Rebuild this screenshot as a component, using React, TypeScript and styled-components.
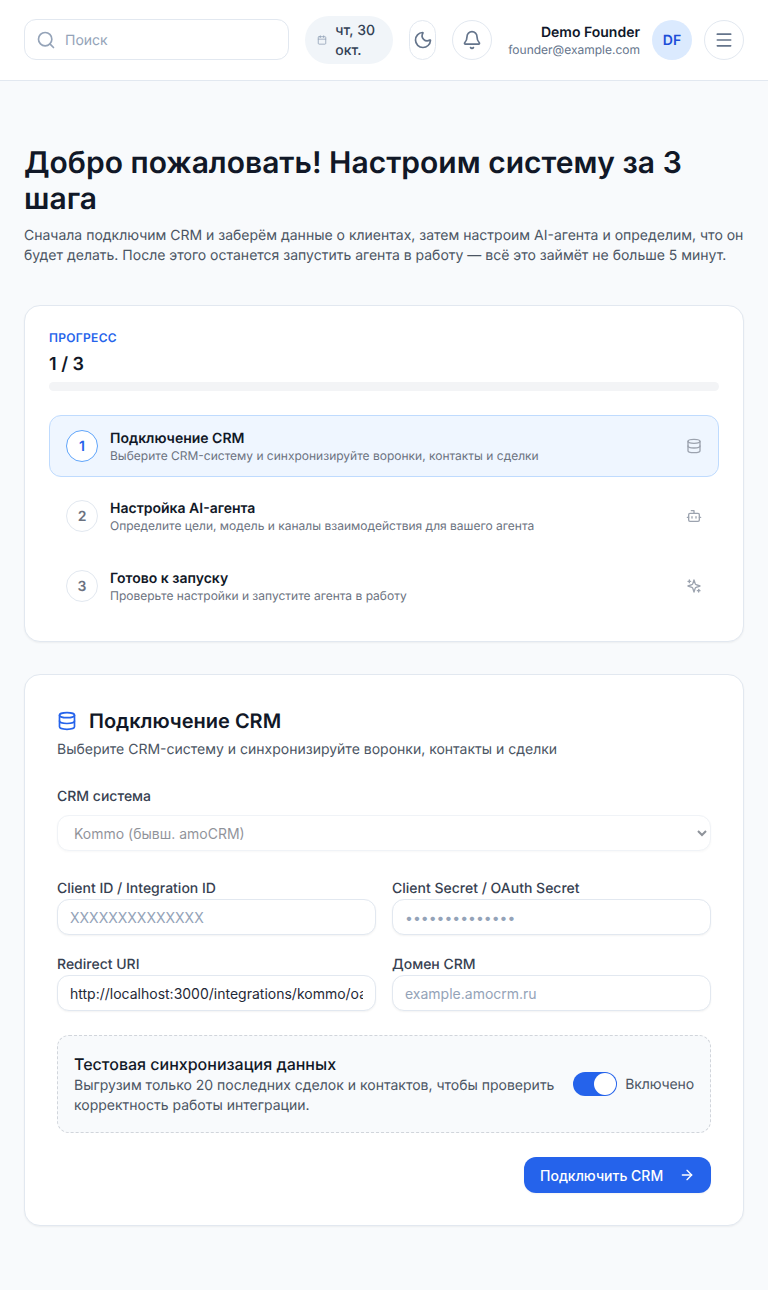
import React from "react";
import styled, { createGlobalStyle } from "styled-components";
import { Search, Calendar, Moon, Bell, Menu, Database, Bot, ArrowRight } from "lucide-react";

const Global = createGlobalStyle`
  * { box-sizing: border-box; }
  html, body { margin: 0; padding: 0; }
  body {
    background: #f8fafc;
    font-family: Inter, "Noto Sans", sans-serif;
    color: #111827;
    text-rendering: geometricPrecision;
    -webkit-font-smoothing: antialiased;
  }
`;

const Page = styled.div`
  min-height: 1290px;
  background: #f8fafc;
`;
const Header = styled.header`
  height: 81px;
  background: #fff;
  border-bottom: 1px solid #e2e8f0;
  padding: 0 24px;
  display: flex;
  align-items: center;
  gap: 16px;
`;
const SearchBox = styled.div`
  flex: 1;
  height: 41px;
  margin-bottom: 1px;
  border: 1px solid #e2e8f0;
  border-radius: 12px;
  background: #fff;
  display: flex;
  align-items: center;
  gap: 9px;
  padding: 0 12px 0 11px;
  color: #94a3b8;
  font-size: 14px;
`;
const SearchText = styled.span`
  padding-top: 2px;
`;
const DatePill = styled.div`
  width: 88px;
  height: 48px;
  flex: none;
  border-radius: 24px;
  background: #f1f5f9;
  color: #334155;
  display: flex;
  align-items: center;
  gap: 8px;
  padding: 0 12px;
  font-size: 14px;
  font-weight: 500;
  line-height: 20px;
  svg { color: #94a3b8; flex: none; }
`;
const DateText = styled.span`
  padding-top: 2px;
`;
const IconButton = styled.button<{ $w?: number; $tight?: boolean }>`
  width: ${(p) => p.$w ?? 40}px;
  height: 40px;
  flex: none;
  padding: 0;
  margin-left: ${(p) => (p.$tight ? "-4px" : "0")};
  border: 1px solid #e2e8f0;
  border-radius: 20px;
  background: #fff;
  color: #64748b;
  display: flex;
  align-items: center;
  justify-content: center;
`;
const User = styled.div`
  display: flex;
  align-items: center;
  gap: 12px;
  flex: none;
`;
const UserText = styled.div`
  text-align: right;
`;
const UserName = styled.div`
  font-size: 14px;
  font-weight: 600;
  line-height: 20px;
  padding-top: 1px;
  margin-bottom: -1px;
  color: #0f172a;
`;
const UserMail = styled.div`
  font-size: 12px;
  line-height: 16px;
  color: #64748b;
`;
const Avatar = styled.div`
  width: 40px;
  height: 40px;
  border-radius: 50%;
  background: #dbeafe;
  color: #1d4ed8;
  font-size: 14px;
  font-weight: 600;
  display: flex;
  align-items: center;
  justify-content: center;
`;
const Main = styled.main`
  padding: 64px 24px 0;
`;
const Title = styled.h1`
  margin: 0 0 9px;
  font-size: 30px;
  line-height: 36px;
  font-weight: 600;
  color: #111827;
`;
const Lead = styled.p`
  margin: 0 0 39px;
  font-size: 14px;
  line-height: 20px;
  color: #4b5563;
`;
const Card = styled.section<{ $pad: number }>`
  background: #fff;
  border: 1px solid #e2e8f0;
  border-radius: 16px;
  padding: ${(p) => p.$pad}px;
  box-shadow: 0 1px 2px rgba(0, 0, 0, 0.05);
  margin-bottom: 32px;
`;
const Eyebrow = styled.div`
  font-size: 12px;
  line-height: 16px;
  font-weight: 600;
  letter-spacing: 0.3px;
  color: #2563eb;
  text-transform: uppercase;
`;
const Count = styled.div`
  margin-top: 5px;
  margin-bottom: -1px;
  font-size: 18px;
  line-height: 28px;
  font-weight: 600;
  color: #111827;
`;
const Track = styled.div`
  margin-top: 4px;
  height: 9px;
  border-radius: 5px;
  background: #f3f4f6;
`;
const Steps = styled.div`
  margin-top: 24px;
  display: flex;
  flex-direction: column;
  gap: 8px;
`;
const Step = styled.div<{ $active?: boolean }>`
  height: 62px;
  border: 1px solid ${(p) => (p.$active ? "#bfdbfe" : "transparent")};
  background: ${(p) => (p.$active ? "#eff6ff" : "transparent")};
  border-radius: 12px;
  padding: 0 16px;
  display: flex;
  align-items: center;
  gap: 12px;
  svg { color: #9ca3af; flex: none; }
`;
const StepNum = styled.div<{ $active?: boolean }>`
  width: 32px;
  height: 32px;
  flex: none;
  border-radius: 50%;
  border: 1px solid ${(p) => (p.$active ? "#60a5fa" : "#e2e8f0")};
  background: #fff;
  color: ${(p) => (p.$active ? "#2563eb" : "#6b7280")};
  font-size: 14px;
  font-weight: 600;
  display: flex;
  align-items: center;
  justify-content: center;
`;
const StepText = styled.div`
  flex: 1;
  min-width: 0;
  padding-top: 2px;
`;
const StepTitle = styled.div`
  font-size: 14px;
  line-height: 18px;
  font-weight: 600;
  color: #111827;
`;
const StepDesc = styled.div`
  font-size: 12px;
  line-height: 16px;
  color: #6b7280;
`;
const FormTitle = styled.h2`
  margin: 0;
  display: flex;
  align-items: center;
  gap: 12px;
  font-size: 20px;
  line-height: 28px;
  font-weight: 600;
  color: #111827;
  svg { color: #2563eb; }
`;
const FormDesc = styled.p`
  margin: 5px 0 27px;
  font-size: 14px;
  line-height: 20px;
  color: #4b5563;
`;
const Field = styled.label<{ $gap: number }>`
  display: flex;
  flex-direction: column;
  gap: ${(p) => p.$gap}px;
  min-width: 0;
`;
const FieldLabel = styled.span`
  font-size: 14px;
  line-height: 20px;
  font-weight: 500;
  color: #374151;
`;
const Input = styled.input`
  width: 100%;
  height: 36px;
  border: 1px solid #e2e8f0;
  border-radius: 12px;
  background: #fff;
  padding: 0 12px;
  font: 400 14px Inter, sans-serif;
  color: #1f2937;
  box-shadow: 0 1px 2px rgba(0, 0, 0, 0.05);
  outline: none;
  &::placeholder { color: #94a3b8; opacity: 1; }
`;
const Select = styled.select`
  width: 100%;
  height: 36px;
  border: 1px solid #e2e8f0;
  border-radius: 12px;
  background: #fff;
  padding: 0 12px;
  font: 400 14px Inter, sans-serif;
  color: #1f2937;
  box-shadow: 0 1px 2px rgba(0, 0, 0, 0.05);
  opacity: 0.5;
`;
const Grid = styled.div`
  margin-top: 28px;
  display: grid;
  grid-template-columns: 1fr 1fr;
  gap: 20px 16px;
`;
const SyncBox = styled.div`
  margin-top: 24px;
  height: 98px;
  border: 1px dashed #d1d5db;
  border-radius: 12px;
  background: #f8fafc;
  padding: 0 16px;
  display: flex;
  align-items: center;
  gap: 16px;
`;
const SyncText = styled.div`
  flex: 1;
  min-width: 0;
`;
const SyncTitle = styled.div`
  font-size: 16px;
  line-height: 22px;
  font-weight: 500;
  color: #111827;
`;
const SyncDesc = styled.div`
  margin-top: 1px;
  font-size: 14px;
  line-height: 20px;
  color: #4b5563;
`;
const ToggleWrap = styled.div`
  display: flex;
  align-items: center;
  gap: 8px;
  font-size: 14px;
  letter-spacing: -0.1px;
  color: #4b5563;
  flex: none;
`;
const Toggle = styled.div`
  width: 44px;
  height: 24px;
  border-radius: 12px;
  background: #2563eb;
  padding: 1px;
  display: flex;
  justify-content: flex-end;
  &::after {
    content: "";
    width: 22px;
    height: 22px;
    border-radius: 50%;
    background: #fff;
  }
`;
const Actions = styled.div`
  margin-top: 24px;
  display: flex;
  justify-content: flex-end;
`;
const Primary = styled.button`
  width: 187px;
  height: 36px;
  padding: 0 16px;
  border: 0;
  border-radius: 12px;
  background: #2563eb;
  color: #fff;
  font: 500 14px Inter, sans-serif;
  display: flex;
  align-items: center;
  justify-content: space-between;
  box-shadow: 0 1px 2px rgba(0, 0, 0, 0.05);
`;

const OldSparkles = ({ size }: { size: number }) => (
  <svg width={size} height={size} viewBox="0 0 24 24" fill="none" stroke="currentColor" strokeWidth="2" strokeLinecap="round" strokeLinejoin="round">
    <path d="m12 3-1.912 5.813a2 2 0 0 1-1.275 1.275L3 12l5.813 1.912a2 2 0 0 1 1.275 1.275L12 21l1.912-5.813a2 2 0 0 1 1.275-1.275L21 12l-5.813-1.912a2 2 0 0 1-1.275-1.275L12 3Z" />
    <path d="M5 3v4" />
    <path d="M19 17v4" />
    <path d="M3 5h4" />
    <path d="M17 19h4" />
  </svg>
);

const steps = [
  { t: "Подключение CRM", d: "Выберите CRM-систему и синхронизируйте воронки, контакты и сделки", I: Database },
  { t: "Настройка AI-агента", d: "Определите цели, модель и каналы взаимодействия для вашего агента", I: Bot },
  { t: "Готово к запуску", d: "Проверьте настройки и запустите агента в работу", I: OldSparkles },
];

export default function App() {
  return (
    <Page>
      <Global />
      <Header>
        <SearchBox>
          <Search size={20} strokeWidth={2} />
          <SearchText>Поиск</SearchText>
        </SearchBox>
        <DatePill>
          <Calendar size={10} />
          <DateText>чт, 30 окт.</DateText>
        </DatePill>
        <IconButton $w={27} aria-label="Тема"><Moon size={20} /></IconButton>
        <IconButton aria-label="Уведомления"><Bell size={20} /></IconButton>
        <User>
          <UserText>
            <UserName>Demo Founder</UserName>
            <UserMail>founder@example.com</UserMail>
          </UserText>
          <Avatar>DF</Avatar>
        </User>
        <IconButton $tight aria-label="Меню"><Menu size={20} /></IconButton>
      </Header>
      <Main>
        <Title>Добро пожаловать! Настроим систему за 3 шага</Title>
        <Lead>
          Сначала подключим CRM и заберём данные о клиентах, затем настроим AI-агента и определим, что он будет делать. После этого останется запустить агента в работу — всё это займёт не больше 5 минут.
        </Lead>
        <Card $pad={24}>
          <Eyebrow>Прогресс</Eyebrow>
          <Count>1 / 3</Count>
          <Track />
          <Steps>
            {steps.map((s, i) => (
              <Step key={s.t} $active={i === 0}>
                <StepNum $active={i === 0}>{i + 1}</StepNum>
                <StepText>
                  <StepTitle>{s.t}</StepTitle>
                  <StepDesc>{s.d}</StepDesc>
                </StepText>
                <s.I size={16} />
              </Step>
            ))}
          </Steps>
        </Card>
        <Card $pad={32}>
          <FormTitle><Database size={20} />Подключение CRM</FormTitle>
          <FormDesc>Выберите CRM-систему и синхронизируйте воронки, контакты и сделки</FormDesc>
          <Field $gap={8}>
            <FieldLabel>CRM система</FieldLabel>
            <Select disabled defaultValue="kommo">
              <option value="kommo">Kommo (бывш. amoCRM)</option>
            </Select>
          </Field>
          <Grid>
            <Field $gap={0}>
              <FieldLabel>Client ID / Integration ID</FieldLabel>
              <Input placeholder="XXXXXXXXXXXXXX" />
            </Field>
            <Field $gap={0}>
              <FieldLabel>Client Secret / OAuth Secret</FieldLabel>
              <Input type="password" placeholder="••••••••••••••" />
            </Field>
            <Field $gap={0}>
              <FieldLabel>Redirect URI</FieldLabel>
              <Input defaultValue="http://localhost:3000/integrations/kommo/oauth/callback" />
            </Field>
            <Field $gap={0}>
              <FieldLabel>Домен CRM</FieldLabel>
              <Input placeholder="example.amocrm.ru" />
            </Field>
          </Grid>
          <SyncBox>
            <SyncText>
              <SyncTitle>Тестовая синхронизация данных</SyncTitle>
              <SyncDesc>Выгрузим только 20 последних сделок и контактов, чтобы проверить корректность работы интеграции.</SyncDesc>
            </SyncText>
            <ToggleWrap><Toggle />Включено</ToggleWrap>
          </SyncBox>
          <Actions>
            <Primary>Подключить CRM<ArrowRight size={16} /></Primary>
          </Actions>
        </Card>
      </Main>
    </Page>
  );
}
